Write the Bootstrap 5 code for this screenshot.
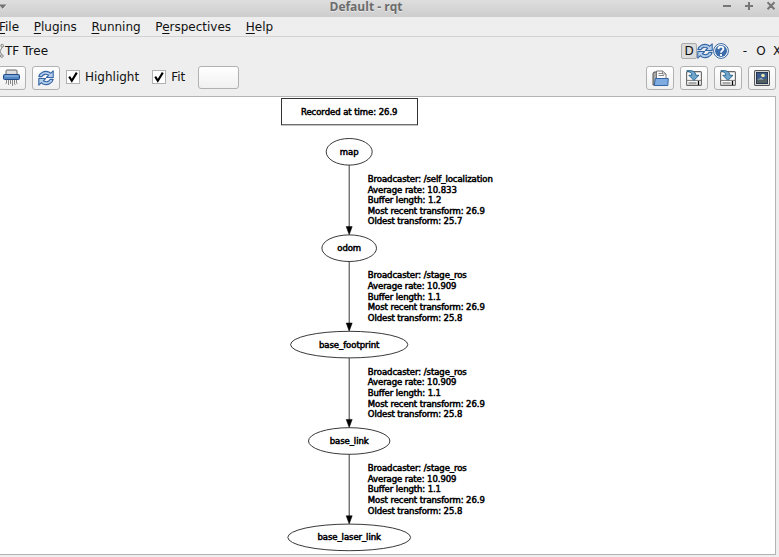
<!DOCTYPE html>
<html lang="en">
<head>
<meta charset="utf-8">
<meta name="viewport" content="width=device-width, initial-scale=1">
<title>Default - rqt</title>
<link href="https://cdn.jsdelivr.net/npm/bootstrap@5.3.0/dist/css/bootstrap.min.css" rel="stylesheet">
<style>
body{font:12px/16px "DejaVu Sans",sans-serif;color:#111;background:#eee;height:557px}
svg{display:block;flex:none}
.titlebar{height:17px;background:linear-gradient(#dedede,#cdcdcd);display:grid!important;grid-template-columns:329.5px 1fr auto}
.titlebar .caption{font:bold 12px/13px "Open Sans","Noto Sans",sans-serif;color:#6c6c6c;text-shadow:0 1px #e8e8e8;white-space:nowrap}
.menus{height:20px;border-bottom:1px solid #d2d2d2;gap:14.7px;margin-left:-1px;padding-top:2px}
.menus a{color:#111;text-decoration:none}
.menus u{text-decoration-thickness:1px;text-underline-offset:2px}
.dockbar{height:27px}
.dockbar .dkey{width:16px;height:16px;border:1px solid #aaa;border-radius:2px;background:#dcdcdc;line-height:14px;text-align:center}
.dockbar .wkey{width:16px;text-align:center;flex:none}
.dockbar .keys{margin-right:-6px}
.tools{height:32px;padding-top:2px}
.tool{width:28px;height:24px;padding:0;border:1px solid #b1b1b1;border-radius:3px;background:linear-gradient(#fff,#f0f0f0);display:flex;align-items:center;justify-content:center;flex:none}
.tool.blank{width:41px}
.tick{width:14px;height:14px;border:1px solid #b1b1b1;background:#fff;margin:0}
.view{height:459px;width:777px;margin-left:-1px;border:1px solid #b4b4b4;background:#fff}
.graph text{font-family:"DejaVu Sans",sans-serif;font-size:8.5px;fill:#000;stroke:#000;stroke-width:.5px}
</style>
<script src="https://cdn.jsdelivr.net/npm/bootstrap@5.3.0/dist/js/bootstrap.bundle.min.js"></script>
</head>
<body class="overflow-hidden d-flex flex-column">
<svg width="0" height="0" class="position-absolute">
  <defs>
    <symbol id="refresh" viewBox="0 0 16 16">
      <g fill="#b5cfec" stroke="#3465a4" stroke-width="1.1" stroke-linejoin="round">
        <path d="M.8 6.6C1.5 3 6.2.1 11 2L12.6 3.3 15.2.8V7.5H8.4L10.7 5.2C8 3.6 5.1 4.2 4 6.6Z"/>
        <path d="M15.2 9.4C14.5 13 9.8 15.9 5 14L3.4 12.7.8 15.2V8.5H7.6L5.3 10.8C8 12.4 10.9 11.8 12 9.4Z"/>
      </g>
    </symbol>
    <symbol id="save" viewBox="0 0 16 16">
      <rect x=".6" y="1.6" width="14.8" height="13.8" rx="1" fill="#fafafa" stroke="#666" stroke-width="1.1"/>
      <path d="M1 10.4h14" stroke="#777"/>
      <rect x="2.5" y="12" width="8" height="2.3" fill="#aaa"/>
      <path d="M12.5 11v4" stroke="#000" stroke-width="1.3"/>
      <path d="M.7.9C5.8-.2 9.6 1.5 9.9 5.3H13L7.9 10.4 2.8 5.3H5.8C5.9 3 4 1.6.7.9Z" fill="#71a6cc" stroke="#24618c" stroke-width=".9" stroke-linejoin="round"/>
    </symbol>
  </defs>
</svg>

<header class="titlebar d-grid">
  <svg width="8" height="14"><path d="M-1 4.5H6.5L2.7 8.8Z" fill="#747474"/><path d="M3 9.4 6.8 5" stroke="#eee" stroke-width=".7"/></svg>
  <div class="caption">Default - rqt</div>
  <svg width="57" height="14" fill="none" stroke="#777" stroke-width="2"><path d="M1 6h8M23 6h8M27 2v8M45.5 2.3l7 7M52.5 2.3l-7 7"/></svg>
</header>

<nav class="menus d-flex">
  <a href="#"><u>F</u>ile</a><a href="#"><u>P</u>lugins</a><a href="#"><u>R</u>unning</a><a href="#">P<u>e</u>rspectives</a><a href="#"><u>H</u>elp</a>
</nav>

<div class="dockbar d-flex align-items-center">
  <svg width="5" height="16" fill="#ddd" stroke="#888"><path d="M0 8 3 3M0 8 2 13"/><circle cx="2.2" cy="2.7" r="1.4"/><circle cx="1.8" cy="13" r="1.4"/></svg>
  <span>TF Tree</span>
  <div class="keys d-flex align-items-center ms-auto">
    <span class="dkey">D</span>
    <svg width="16" height="16"><use href="#refresh"/></svg>
    <svg width="16" height="16" viewBox="0 0 16 16"><circle cx="8" cy="8" r="7.4" fill="#fff" stroke="#3465a4"/><circle cx="8" cy="8" r="6" fill="#3c6cac"/><path d="M5.4 6.1C5.5 2.8 10.5 3 10.4 5.9 10.3 7.7 8 7.6 8 9.8M8 11.1v1.8" fill="none" stroke="#fff" stroke-width="1.8"/></svg>
    <span class="wkey ms-2">-</span><span class="wkey">O</span><span class="wkey">X</span>
  </div>
</div>

<div class="tools d-flex align-items-start">
  <button class="tool" style="margin-left:-2px" aria-label="Clear">
    <svg width="18" height="18" viewBox="0 0 18 18" style="margin-right:2px"><rect x="4" y="1" width="11" height="6" rx="1" fill="#ddd" stroke="#666"/><rect x="1.5" y="5.5" width="16" height="5" rx="1" fill="#5287c4" stroke="#204a87"/><path d="M3 7h13" stroke="#a0c2e8"/><path d="M4.5 11v3l-1 1M6.5 11v5M8.5 11v4M10.5 11v6M12.5 11v4l1 1M14.5 11v3l1 1" fill="none" stroke="#888"/></svg>
  </button>
  <button class="tool" style="margin-left:6px" aria-label="Refresh"><svg width="16" height="16"><use href="#refresh"/></svg></button>
  <label class="d-flex" style="margin:4px 0 0 6px"><svg class="tick" viewBox="0 0 12 12"><path d="M2.2 5.6 4.8 9.8 9.8 1.6" fill="none" stroke="#000" stroke-width="2.1"/></svg><span style="margin:-1px 0 0 5px">Highlight</span></label>
  <label class="d-flex" style="margin:4px 0 0 13px"><svg class="tick" viewBox="0 0 12 12"><path d="M2.2 5.6 4.8 9.8 9.8 1.6" fill="none" stroke="#000" stroke-width="2.1"/></svg><span style="margin:-1px 0 0 5px">Fit</span></label>
  <button class="tool blank" style="margin-left:12.6px;height:23px" aria-label="Layout"></button>
  <div class="d-flex ms-auto" style="gap:6px;margin-right:3px">
    <button class="tool" aria-label="Open"><svg width="17" height="17" viewBox="0 0 17 17"><path d="M1 15V3.5L2 2h4v13Z" fill="#aaa" stroke="#555"/><path d="M4.5 12V1h6L14 4v8Z" fill="#fafafa" stroke="#777"/><path d="M6.5 3.5h4M6.5 5.5h5.5M10.5 1v3H14" fill="none" stroke="#888"/><path d="M3.3 8.5H16.3L15.8 15.5H2.3Z" fill="#7eace0" stroke="#3465a4" stroke-linejoin="round"/></svg></button>
    <button class="tool" aria-label="Save DOT"><svg width="16" height="16"><use href="#save"/></svg></button>
    <button class="tool" aria-label="Save SVG"><svg width="16" height="16"><use href="#save"/></svg></button>
    <button class="tool" aria-label="Save image"><svg width="16" height="16" viewBox="0 0 16 16"><rect x=".6" y=".6" width="14.8" height="14.8" rx="1" fill="#fff" stroke="#555" stroke-width="1.1"/><rect x="2.5" y="2.5" width="11" height="11" fill="#3b5b8c" stroke="#26364f"/><path d="M3 10 6 8.2 9 9.5 13 8.5V13H3Z" fill="#53605f"/><path d="M3 9.5h7l-3-1.5Z" fill="#a7bacb"/><circle cx="9" cy="5.5" r="1.8" fill="#e9e6b0"/></svg></button>
  </div>
</div>

<main class="view">
  <svg class="graph" width="775" height="457" viewBox="0 97 775 457" id="tree" role="img" aria-label="TF Tree"></svg>
</main>
<script>
const frames = [["map",23,18.8],["odom",27.3,23.8],["base_footprint",58.6,60.5],["base_link",40.7,39],["base_laser_link",61.4,63.5]];
const top0 = 151.8, step = 96.4, cx = 349.2;
let out = `<rect x="281.5" y="98.5" width="136" height="26.3" fill="none" stroke="#333"/>
<text x="${cx}" y="114.8" text-anchor="middle" textLength="96.5">Recorded at time: 26.9</text>`;
frames.forEach(([name, rx, w], i) => {
  const cy = top0 + i * step;
  out += `<ellipse cx="${cx}" cy="${cy}" rx="${rx}" ry="13.3" fill="none" stroke="#222" stroke-width=".9"/>
<text x="${cx}" y="${cy + 3}" text-anchor="middle" textLength="${w}">${name}</text>`;
  if (i === frames.length - 1) return;
  out += `<path d="M${cx} ${cy + 13.3}V${cy + 76}" stroke="#222" stroke-width=".9"/><path d="M${cx - 3} ${cy + 74.8}h6L${cx} ${cy + 83}Z" stroke="#000" stroke-width=".5"/>`;
  const rows = i
    ? [["Broadcaster: /stage_ros",99],["Average rate: 10.909",88.7],["Buffer length: 1.1",73.2],["Most recent transform: 26.9",117],["Oldest transform: 25.8",94.5]]
    : [["Broadcaster: /self_localization",125],["Average rate: 10.833",89],["Buffer length: 1.2",73.5],["Most recent transform: 26.9",117],["Oldest transform: 25.7",94.5]];
  rows.forEach(([t, len], k) => out += `<text x="367.8" y="${cy + 30.1 + k * 10.63}" textLength="${len}">${t}</text>`);
});
document.getElementById("tree").innerHTML = out;
</script>
</body>
</html>
